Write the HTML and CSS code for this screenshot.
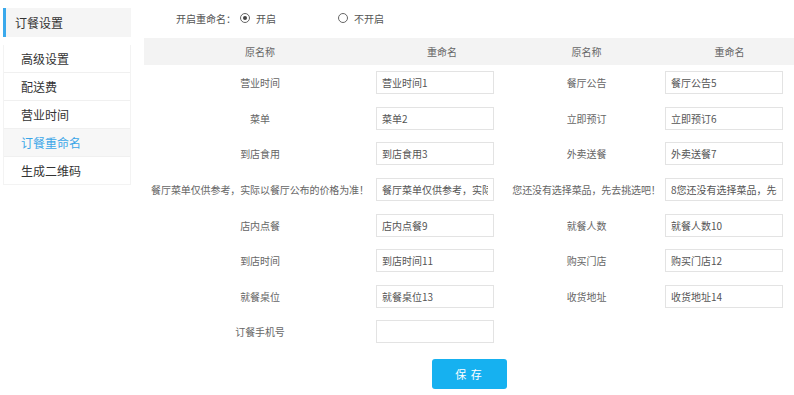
FILE: index.html
```html
<!DOCTYPE html>
<html lang="zh-CN">
<head>
    <meta charset="UTF-8">
    <title>订餐重命名</title>
    <link rel="stylesheet" href="styles.css">
</head>
<body>
    <div class="page">
        <!-- left menu -->
        <div class="side">
            <div class="side-title">订餐设置</div>
            <ul class="side-menu">
                <li>高级设置</li>
                <li>配送费</li>
                <li>营业时间</li>
                <li class="active">订餐重命名</li>
                <li>生成二维码</li>
            </ul>
        </div>

        <div class="main">
            <div class="switch-row">
                <span class="switch-label">开启重命名：</span>
                <span class="radio checked"><i></i>开启</span>
                <span class="radio"><i></i>不开启</span>
            </div>

            <table class="rename-table">
                <colgroup>
                    <col class="c-name1">
                    <col class="c-input1">
                    <col class="c-name2">
                    <col class="c-input2">
                </colgroup>
                <thead>
                    <tr>
                        <th>原名称</th>
                        <th>重命名</th>
                        <th>原名称</th>
                        <th>重命名</th>
                    </tr>
                </thead>
                <tbody>
                    <tr>
                        <td class="name">营业时间</td>
                        <td><input type="text" value="营业时间1"></td>
                        <td class="name">餐厅公告</td>
                        <td><input type="text" value="餐厅公告5"></td>
                    </tr>
                    <tr>
                        <td class="name">菜单</td>
                        <td><input type="text" value="菜单2"></td>
                        <td class="name">立即预订</td>
                        <td><input type="text" value="立即预订6"></td>
                    </tr>
                    <tr>
                        <td class="name">到店食用</td>
                        <td><input type="text" value="到店食用3"></td>
                        <td class="name">外卖送餐</td>
                        <td><input type="text" value="外卖送餐7"></td>
                    </tr>
                    <tr>
                        <td class="name">餐厅菜单仅供参考，实际以餐厅公布的价格为准！</td>
                        <td><input type="text" value="餐厅菜单仅供参考，实际以餐厅公布的价格为准！"></td>
                        <td class="name">您还没有选择菜品，先去挑选吧！</td>
                        <td><input type="text" value="8您还没有选择菜品，先去挑选吧！"></td>
                    </tr>
                    <tr>
                        <td class="name">店内点餐</td>
                        <td><input type="text" value="店内点餐9"></td>
                        <td class="name">就餐人数</td>
                        <td><input type="text" value="就餐人数10"></td>
                    </tr>
                    <tr>
                        <td class="name">到店时间</td>
                        <td><input type="text" value="到店时间11"></td>
                        <td class="name">购买门店</td>
                        <td><input type="text" value="购买门店12"></td>
                    </tr>
                    <tr>
                        <td class="name">就餐桌位</td>
                        <td><input type="text" value="就餐桌位13"></td>
                        <td class="name">收货地址</td>
                        <td><input type="text" value="收货地址14"></td>
                    </tr>
                    <tr>
                        <td class="name">订餐手机号</td>
                        <td><input type="text" value=""></td>
                        <td></td>
                        <td></td>
                    </tr>
                </tbody>
            </table>

            <div class="actions">
                <button class="btn-save">保 存</button>
            </div>
        </div>
    </div>
</body>
</html>
```

FILE: styles.css
```css
/* base */
body {
    margin: 0;
    font-family: "Noto Sans CJK SC", "Noto Sans", sans-serif;
    color: #666;
    background: #fff;
}

.page {
    display: flex;
    align-items: flex-start;
}

/* left menu */
.side {
    width: 128px;
    flex: none;
    margin: 8px 0 0 3px;
}

.side-title {
    height: 29px;
    line-height: 29px;
    background: #f5f5f5;
    border-left: 3px solid #3aa9ec;
    padding-left: 9px;
    font-size: 12px;
    color: #333;
}

.side-menu {
    list-style: none;
    margin: 8px 0 0;
    padding: 0;
    border: 1px solid #f3f3f3;
    border-top: none;
}

.side-menu li {
    height: 27px;
    line-height: 27px;
    padding-left: 17px;
    font-size: 12px;
    color: #333;
    border-bottom: 1px solid #f0f0f0;
}

.side-menu li:last-child {
    border-bottom: none;
}

.side-menu li.active {
    background: #f7f7f7;
    color: #3ba6e8;
}

/* main area */
.main {
    width: 650px;
    flex: none;
    margin-left: 13px;
}

.switch-row {
    display: flex;
    align-items: center;
    height: 20px;
    margin-top: 8px;
    padding-left: 32px;
    font-size: 10px;
    color: #555;
}

.switch-label {
    width: 64px;
    white-space: nowrap;
}

.radio {
    display: flex;
    align-items: center;
    margin-right: 62px;
}

.radio i {
    box-sizing: border-box;
    width: 10px;
    height: 10px;
    border: 1px solid #666;
    border-radius: 50%;
    margin-right: 6px;
    position: relative;
}

.radio.checked i::after {
    content: "";
    position: absolute;
    left: 2px;
    top: 2px;
    width: 4px;
    height: 4px;
    border-radius: 50%;
    background: #444;
}

/* rename table */
.rename-table {
    width: 650px;
    margin-top: 10px;
    table-layout: fixed;
    border-collapse: collapse;
    font-size: 10px;
}

.c-name1 { width: 232px; }
.c-input1 { width: 132px; }
.c-name2 { width: 157px; }
.c-input2 { width: 129px; }

.rename-table th {
    height: 27px;
    padding: 0;
    background: #f3f3f3;
    font-weight: normal;
    color: #666;
}

.rename-table td {
    height: 35.6px;
    padding: 0;
    vertical-align: middle;
}

.rename-table td.name {
    text-align: center;
    white-space: nowrap;
    letter-spacing: -0.1px;
    color: #666;
}

.rename-table input {
    box-sizing: border-box;
    display: block;
    width: 118px;
    height: 23px;
    margin: 0;
    border: 1px solid #e3e3e3;
    padding: 0 5px;
    font-family: inherit;
    font-size: 10px;
    color: #555;
    outline: none;
}

/* save button */
.actions {
    display: flex;
    justify-content: center;
    margin-top: 9px;
}

.btn-save {
    width: 75px;
    height: 30px;
    border: none;
    border-radius: 3px;
    background: #16b1f0;
    color: #fff;
    font-family: inherit;
    font-size: 11px;
    letter-spacing: 1px;
    cursor: pointer;
}
```
